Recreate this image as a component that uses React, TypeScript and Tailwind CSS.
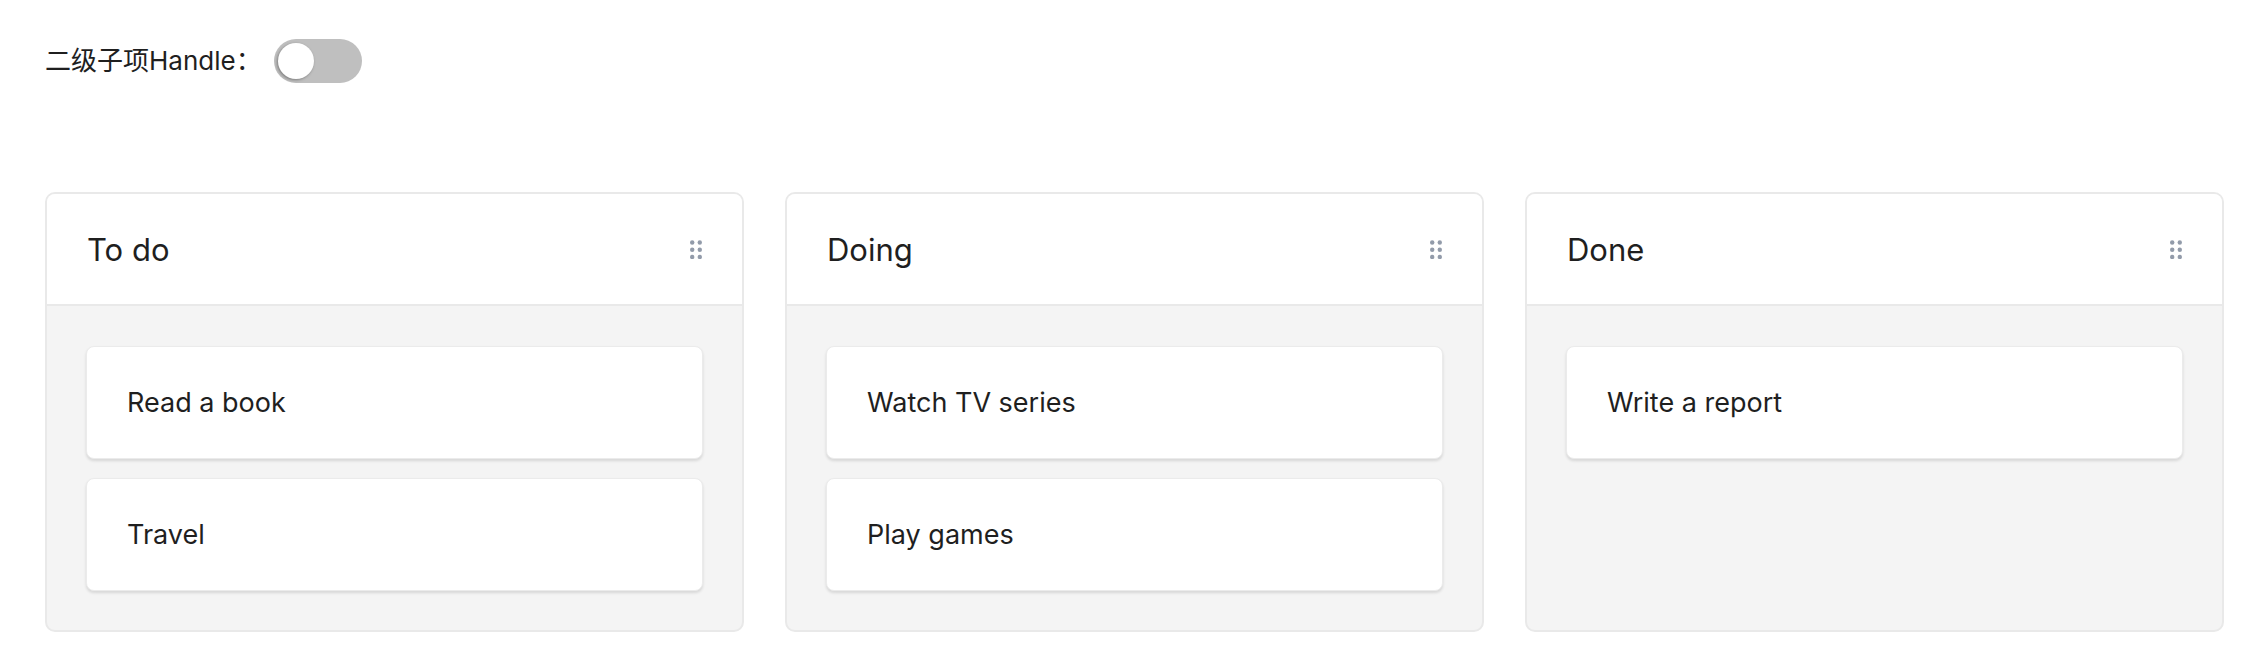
import React from "react";

const columns = [
  { title: "To do", items: ["Read a book", "Travel"] },
  { title: "Doing", items: ["Watch TV series", "Play games"] },
  { title: "Done", items: ["Write a report"] },
];

function DragIcon() {
  return (
    <svg width="12" height="19" viewBox="0 0 12 19" fill="#929baa">
      <circle cx="2.2" cy="2.5" r="2.2" />
      <circle cx="9.8" cy="2.5" r="2.2" />
      <circle cx="2.2" cy="9.7" r="2.2" />
      <circle cx="9.8" cy="9.7" r="2.2" />
      <circle cx="2.2" cy="17" r="2.2" />
      <circle cx="9.8" cy="17" r="2.2" />
    </svg>
  );
}

export default function App() {
  return (
    <div
      className="min-h-screen bg-white text-[#1f1f1f]"
      style={{ fontFamily: 'Inter, "Noto Sans CJK SC", sans-serif' }}
    >
      <div className="pl-[45px] pt-[39px] flex items-center h-[83px]">
        <span className="text-[26px] leading-none">二级子项Handle：</span>
        <div className="ml-[12px] w-[88px] h-[44px] rounded-full bg-[#bfbfbf] flex items-center px-[4px]">
          <div className="w-[36px] h-[36px] rounded-full bg-white shadow-[-1px_1px_3px_rgba(0,0,0,0.35)]" />
        </div>
      </div>

      <div className="pl-[45px] pr-[40px] mt-[109px] grid grid-cols-3 gap-x-[41px] items-stretch">
        {columns.map((col) => (
          <div
            key={col.title}
            className="flex flex-col border-2 border-[#e9e9e9] rounded-[10px] overflow-hidden bg-[#f4f4f4] h-[440px]"
          >
            <div className="h-[112px] bg-white border-b-2 border-[#e9e9e9] flex items-center justify-between pl-[40px] pr-[40px]">
              <span className="text-[31px] leading-none">{col.title}</span>
              <DragIcon />
            </div>
            <div className="flex-1 px-[39px] pt-[40px] pb-[39px] flex flex-col gap-[19px]">
              {col.items.map((it) => (
                <div
                  key={it}
                  className="h-[113px] bg-white rounded-[8px] border border-[#ebebeb] shadow-[0_2px_3px_rgba(0,0,0,0.12)] flex items-center pl-[40px]"
                >
                  <span className="text-[27px] leading-none">{it}</span>
                </div>
              ))}
            </div>
          </div>
        ))}
      </div>
    </div>
  );
}
